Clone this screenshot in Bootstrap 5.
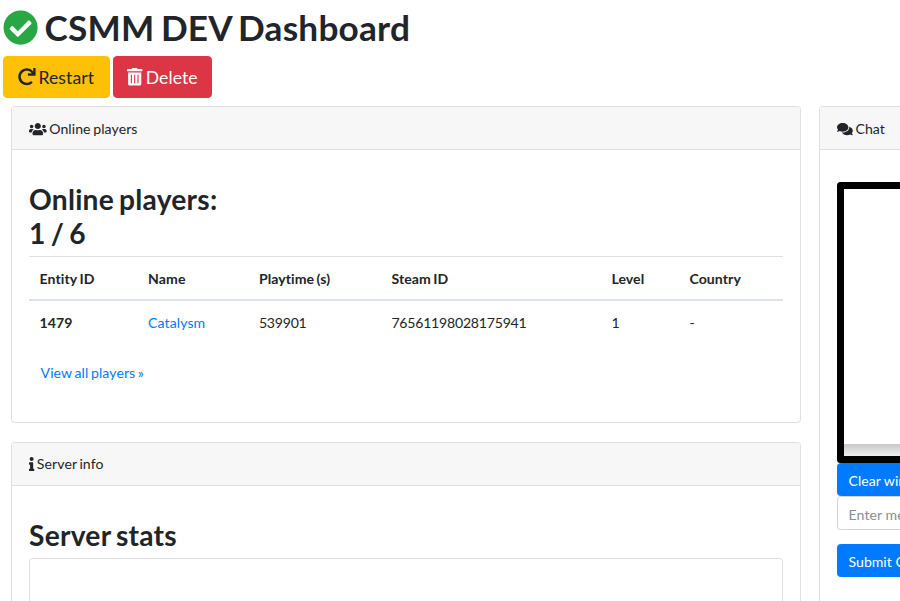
<!DOCTYPE html>
<html lang="en">
<head>
<meta charset="utf-8">
<meta name="viewport" content="width=device-width, initial-scale=1">
<title>CSMM DEV Dashboard</title>
<link rel="stylesheet" href="https://cdn.jsdelivr.net/npm/bootstrap@5.3.0/dist/css/bootstrap.min.css">
<style>
html { font-size: 14.08px; overflow: hidden; }
body { font-family: Lato, "Liberation Sans", sans-serif; color: #212529; overflow: hidden; height: 100vh; padding: 6px 0 0 3px; letter-spacing: .08px; word-spacing: -1.1px; }
a { color: #007bff; text-decoration: none; }
h1, h2 { font-weight: 700; line-height: 1.2; }
h1 { font-size: 35.2px; margin-bottom: 8px; letter-spacing: .22px; word-spacing: -2.4px; }
h2 { font-size: 28.16px; margin-bottom: 5px; letter-spacing: .25px; word-spacing: -2px; }
.fa-glyph { height: 1em; fill: currentColor; vertical-align: -.125em; overflow: visible; }
.status-ok { fill: #28a745; }
.action-bar { gap: 3px; }
.btn { --bs-btn-border-radius: 3.5px; --bs-btn-padding-x: .75rem; }
.btn-link { --bs-btn-color: #007bff; text-decoration: none; padding-top: 3.8px; }
.btn-lg { --bs-btn-font-size: 17.6px; --bs-btn-border-radius: 4px; height: 42px; padding: 7.5px 12px 6px; letter-spacing: .1px; white-space: nowrap; }
.btn-warning { --bs-btn-bg: #ffc107; --bs-btn-color: #212529; width: 107px; padding-right: 13px; }
.btn-danger { width: 99px; }
.btn-danger, .btn-warning { word-spacing: -1.6px; }
.btn-primary { --bs-btn-bg: #007bff; --bs-btn-border-color: #007bff; height: 33.5px; padding-top: 6.2px; }
.dash-cols { margin: 8px 0 0 8px; gap: 18px; width: 1300px; }
.main-col { width: 790px; flex: none; }
.chat-col { width: 460px; flex: none; }
.card { --bs-card-border-color: #dfdfdf; --bs-card-border-radius: 3.5px; --bs-card-inner-border-radius: 2.5px; --bs-card-cap-bg: #f7f7f7; }
.card-header { padding: 11px 17px 10.5px; height: 43px; }
.card-body { padding: 32.5px 17.5px 17px 17px; }
.chat-col .card-body { padding-top: 31.5px; }
.players-card { height: 317px; }
.players-card h2 { margin-bottom: 6px; }
.server-card { margin-top: 19px; }
.server-card .card-header { padding-top: 10px; }
.players { table-layout: fixed; --bs-table-color: #212529; border-color: #dee2e6; margin-bottom: 14px; }
.players > :not(caption) > * > * { padding: 10.6px 10.6px 10.4px; border-top: 1px solid #dee2e6; border-bottom: 0; }
.players > tbody > tr > * { border-top: 2px solid #dee2e6; }
.digits { letter-spacing: -.22px; }
.w-id { width: 108.5px; } .w-name { width: 110.8px; } .w-time { width: 132.5px; } .w-steam { width: 220px; } .w-level { width: 78px; }
.stats-box { border: 1px solid #dfdfdf; border-radius: 3.5px; height: 300px; }
.chat-window { height: 281px; border: 7px solid #000; border-radius: 3.5px; }
.scroll-strip { height: 12px; background: linear-gradient(#c8c8c8, #efefef); }
.form-control { height: 33.5px; border-color: #ced4da; border-radius: 3.5px; font-size: 1rem; letter-spacing: .08px; padding-top: 6.6px; padding-bottom: 4.5px; }
.form-control::placeholder { color: #868e96; }
.submit-btn { margin-top: 14px; }
</style>
</head>
<body>
<h1><svg class="fa-glyph status-ok" viewBox="0 0 512 512"><path d="M504 256c0 136.967-111.033 248-248 248S8 392.967 8 256 119.033 8 256 8s248 111.033 248 248zM227.314 387.314l184-184c6.248-6.248 6.248-16.379 0-22.627l-22.627-22.627c-6.248-6.249-16.379-6.249-22.628 0L216 308.118l-70.059-70.059c-6.248-6.248-16.379-6.248-22.628 0l-22.627 22.627c-6.248 6.248-6.248 16.379 0 22.627l104 104c6.249 6.249 16.379 6.249 22.628.001z"/></svg> CSMM DEV Dashboard</h1>
<div class="action-bar d-flex">
<button class="btn btn-warning btn-lg" type="button"><svg class="fa-glyph" viewBox="0 0 512 512"><path d="M500.33 0h-47.41a12 12 0 0 0-12 12.57l4 82.76A247.42 247.42 0 0 0 256 8C119.34 8 7.9 119.53 8 256.19 8.1 393.07 119.1 504 256 504a247.1 247.1 0 0 0 166.18-63.91 12 12 0 0 0 .48-17.43l-34-34a12 12 0 0 0-16.38-.55A176 176 0 1 1 402.1 157.8l-101.53-4.87a12 12 0 0 0-12.57 12v47.41a12 12 0 0 0 12 12h200.33a12 12 0 0 0 12-12V12a12 12 0 0 0-12-12z"/></svg> Restart</button>
<button class="btn btn-danger btn-lg" type="button"><svg class="fa-glyph" viewBox="0 0 448 512"><path d="M32 464a48 48 0 0 0 48 48h288a48 48 0 0 0 48-48V128H32zm272-256a16 16 0 0 1 32 0v224a16 16 0 0 1-32 0zm-96 0a16 16 0 0 1 32 0v224a16 16 0 0 1-32 0zm-96 0a16 16 0 0 1 32 0v224a16 16 0 0 1-32 0zM432 32H312l-9.4-18.7A24 24 0 0 0 281.1 0H166.8a23.72 23.72 0 0 0-21.4 13.3L136 32H16A16 16 0 0 0 0 48v32a16 16 0 0 0 16 16h416a16 16 0 0 0 16-16V48a16 16 0 0 0-16-16z"/></svg> Delete</button>
</div>
<div class="dash-cols d-flex align-items-start">
<div class="main-col">
<div class="card players-card">
<div class="card-header"><svg class="fa-glyph" viewBox="0 0 640 512"><path d="M96 224c35.3 0 64-28.7 64-64s-28.7-64-64-64-64 28.7-64 64 28.7 64 64 64zm448 0c35.3 0 64-28.7 64-64s-28.7-64-64-64-64 28.7-64 64 28.7 64 64 64zm32 32h-64c-17.6 0-33.5 7.1-45.1 18.6 40.3 22.1 68.9 62 75.1 109.4h66c17.7 0 32-14.3 32-32v-32c0-35.3-28.7-64-64-64zm-256 0c61.9 0 112-50.1 112-112S381.9 32 320 32 208 82.1 208 144s50.1 112 112 112zm76.8 32h-8.3c-20.8 10-43.9 16-68.5 16s-47.6-6-68.5-16h-8.3C179.6 288 128 339.6 128 403.2V432c0 26.5 21.5 48 48 48h288c26.5 0 48-21.5 48-48v-28.8c0-63.6-51.6-115.2-115.2-115.2zm-223.7-13.4C161.5 263.1 145.6 256 128 256H64c-35.3 0-64 28.7-64 64v32c0 17.7 14.3 32 32 32h65.9c6.3-47.4 34.9-87.3 75.2-109.4z"/></svg> Online players</div>
<div class="card-body">
<h2>Online players:<br>1 / 6</h2>
<table class="table players">
<colgroup><col class="w-id"><col class="w-name"><col class="w-time"><col class="w-steam"><col class="w-level"><col></colgroup>
<thead><tr><th>Entity ID</th><th>Name</th><th>Playtime (s)</th><th>Steam ID</th><th>Level</th><th>Country</th></tr></thead>
<tbody><tr><th>1479</th><td><a href="#">Catalysm</a></td><td class="digits">539901</td><td class="digits">76561198028175941</td><td>1</td><td>-</td></tr></tbody>
</table>
<a class="btn btn-link" href="#">View all players »</a>
</div>
</div>
<div class="card server-card">
<div class="card-header"><svg class="fa-glyph" viewBox="0 0 192 512"><path d="M20 424.229h20V279.771H20c-11.046 0-20-8.954-20-20V212c0-11.046 8.954-20 20-20h112c11.046 0 20 8.954 20 20v212.229h20c11.046 0 20 8.954 20 20V492c0 11.046-8.954 20-20 20H20c-11.046 0-20-8.954-20-20v-47.771c0-11.046 8.954-20 20-20zM96 0C56.235 0 24 32.235 24 72s32.235 72 72 72 72-32.235 72-72S135.764 0 96 0z"/></svg> Server info</div>
<div class="card-body"><h2>Server stats</h2><div class="stats-box"></div></div>
</div>
</div>
<div class="card chat-col">
<div class="card-header"><svg class="fa-glyph" viewBox="0 0 576 512"><path d="M416 192c0-88.4-93.1-160-208-160S0 103.6 0 192c0 34.3 14.1 65.9 38 92-13.4 30.2-35.5 54.2-35.8 54.5-2.2 2.3-2.8 5.7-1.5 8.7S4.8 352 8 352c36.6 0 66.9-12.3 88.7-25 32.2 15.7 70.3 25 111.3 25 114.9 0 208-71.6 208-160zm122 220c23.9-26 38-57.7 38-92 0-66.9-53.5-124.2-129.3-148.1.9 6.6 1.3 13.3 1.3 20.1 0 105.9-107.7 192-240 192-10.8 0-21.3-.8-31.7-1.9C207.8 439.6 281.8 480 368 480c41 0 79.1-9.2 111.3-25 21.8 12.7 52.1 25 88.7 25 3.2 0 6.1-1.9 7.3-4.8 1.3-2.9.7-6.3-1.5-8.7-.3-.3-22.4-24.2-35.8-54.5z"/></svg> Chat</div>
<div class="card-body d-flex flex-column align-items-start pb-5">
<div class="chat-window w-100 d-flex flex-column justify-content-end"><div class="scroll-strip"></div></div>
<button class="btn btn-primary" type="button">Clear window</button>
<input class="form-control" type="text" placeholder="Enter message">
<button class="btn btn-primary submit-btn" type="button">Submit Chat</button>
</div>
</div>
</div>
<script src="https://cdn.jsdelivr.net/npm/bootstrap@5.3.0/dist/js/bootstrap.bundle.min.js"></script>
</body>
</html>
